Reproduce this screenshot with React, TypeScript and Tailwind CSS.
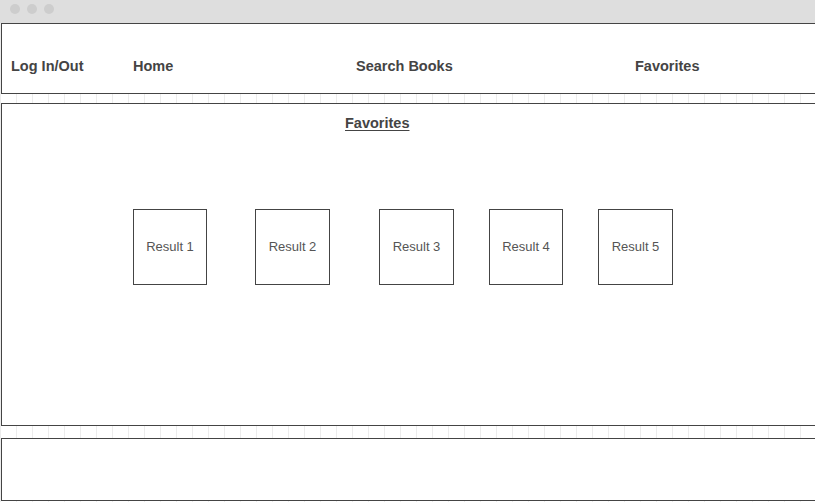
import React from 'react';

const results = [
  { label: 'Result 1', cls: 'ml-[131px] w-[74px]' },
  { label: 'Result 2', cls: 'ml-[48px] w-[75px]' },
  { label: 'Result 3', cls: 'ml-[49px] w-[75px]' },
  { label: 'Result 4', cls: 'ml-[35px] w-[74px]' },
  { label: 'Result 5', cls: 'ml-[35px] w-[75px]' },
];

export default function App() {
  return (
    <div
      className="w-[815px] h-[502px] overflow-hidden bg-white bg-[linear-gradient(to_right,#ececec_1px,transparent_1px)] bg-[size:16px_100%] text-[#444]"
      style={{ fontFamily: '"Liberation Sans", Arial, sans-serif' }}
    >
      {/* Window chrome */}
      <div className="h-[23px] bg-[#dedede] flex items-start gap-[7px] pl-[10px] pt-[4px]">
        <div className="w-[10px] h-[10px] rounded-full bg-[#cdcdcd]" />
        <div className="w-[10px] h-[10px] rounded-full bg-[#cdcdcd]" />
        <div className="w-[10px] h-[10px] rounded-full bg-[#cdcdcd]" />
      </div>

      {/* Header / nav */}
      <header className="ml-[1px] w-[830px] h-[71px] border border-[#444] bg-white flex items-start pt-[32px] pl-[9px] text-[14.5px] font-bold">
        <span className="w-[122px]">Log In/Out</span>
        <span className="w-[223px]">Home</span>
        <span className="w-[279px]">Search Books</span>
        <span>Favorites</span>
      </header>

      {/* Main */}
      <main className="mt-[9px] ml-[1px] w-[830px] h-[323px] border border-[#444] bg-white">
        <h1 className="pt-[9px] ml-[343px] text-[14.5px] font-bold underline underline-offset-2">Favorites</h1>
        <div className="flex mt-[74px]">
          {results.map((r) => (
            <div
              key={r.label}
              className={`${r.cls} h-[76px] border border-[#444] flex items-center justify-center text-[13px] text-[#555]`}
            >
              {r.label}
            </div>
          ))}
        </div>
      </main>

      {/* Footer */}
      <footer className="mt-[12px] ml-[1px] w-[830px] h-[63px] border border-[#444] bg-white" />
    </div>
  );
}
